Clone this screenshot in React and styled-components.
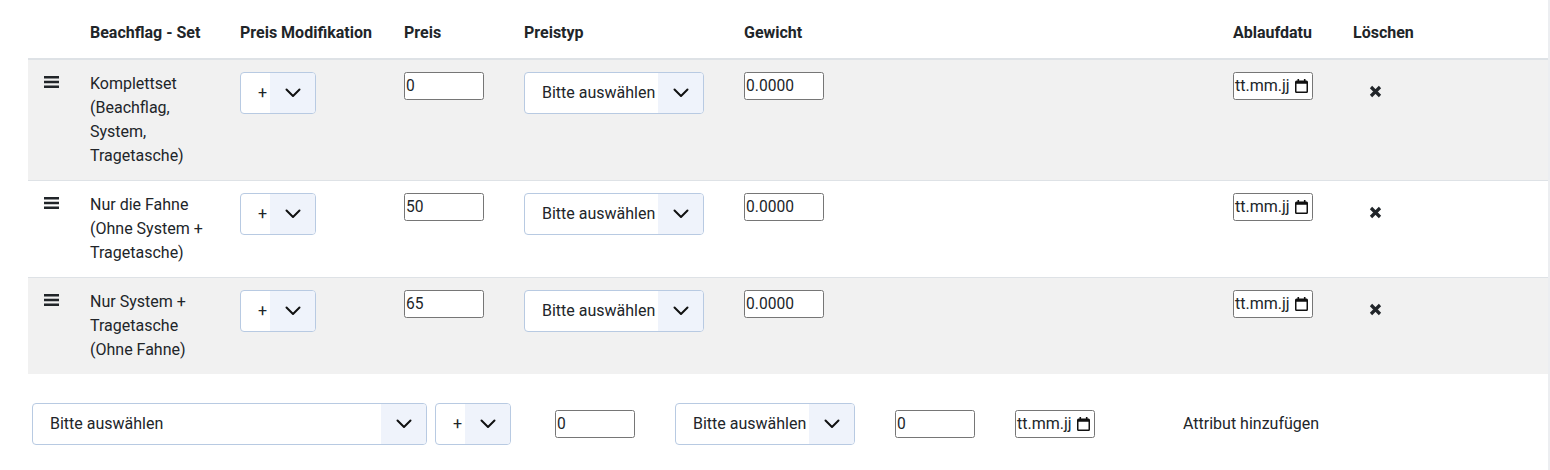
import React from "react"
import styled, { createGlobalStyle } from "styled-components";

const GlobalStyle = createGlobalStyle`
  html, body {
    margin: 0;
    padding: 0;
    background: #fff;
    overflow: hidden;
  }
  body {
    font-family: Roboto, "Liberation Sans", sans-serif;
    font-size: 16px;
    line-height: 24px;
    color: #212529;
  }
`;

const Page = styled.div`
  width: 1550px;
  height: 470px;
  box-sizing: border-box;
  border-right: 2px solid #eceef1;
  padding-left: 28px;
`;

const columns = "62px 150px 164px 120px 220px 489px 120px 1fr";

const HeadRow = styled.div`
  display: grid;
  grid-template-columns: ${columns};
  align-items: start;
  padding-top: 21px;
  box-sizing: border-box;
  border-bottom: 2px solid #dee2e6;
  height: 60px;
`;

const HeadCell = styled.div`
  font-weight: 700;
  white-space: nowrap;
`;

const Row = styled.div`
  display: grid;
  grid-template-columns: ${columns};
  box-sizing: border-box;
  height: ${props => props.$height}px;
  padding-top: 12px;
  align-items: start;
  background: ${props => props.$striped ? "#f1f1f1" : "#fff"};
  border-bottom: ${props => props.$last ? "none" : "1px solid #dee2e6"};
`;

const Handle = styled.div`
  padding-left: 16px;
  height: 20px;
  display: flex;
  align-items: center;
`;

const NameCell = styled.div`
  width: 120px;
`;

const SelectBox = styled.div`
  display: flex;
  box-sizing: border-box;
  width: ${props => props.$width}px;
  height: 42px;
  flex: none;
  background: #fff;
  border: 1px solid #b8cae2;
  border-radius: 4px;
  overflow: hidden;
`;

const SelectValue = styled.div`
  flex: 1;
  min-width: 0;
  padding-left: ${props => props.$pad}px;
  line-height: 39px;
  white-space: nowrap;
  overflow: hidden;
`;

const SelectArrow = styled.div`
  flex: none;
  width: 45px;
  display: flex;
  align-items: center;
  justify-content: center;
  background: #eff3fb;
  color: #111;
`;

const Field = styled.input`
  display: block;
  width: 80px;
  height: 28px;
  box-sizing: border-box;
  flex: none;
  padding: 0 1px;
  border: 1px solid #767676;
  border-radius: 2.5px;
  background: #fff;
  font-family: Roboto, sans-serif;
  font-size: 15.6px;
  color: #212529;
  outline: none;
`;

const DateField = styled.div`
  display: flex;
  align-items: center;
  justify-content: space-between;
  width: 80px;
  height: 28px;
  box-sizing: border-box;
  flex: none;
  padding: 0 4px 1px 1px;
  border: 1px solid #767676;
  border-radius: 2.5px;
  background: #fff;
  font-size: 16px;
  color: #212529;
  white-space: nowrap;
  overflow: hidden;
`;

const DeleteCell = styled.div`
  padding: 13px 0 0 16px;
  display: flex;
  color: #212529;
`;

const AddBar = styled.div`
  display: flex;
  align-items: center;
  margin-left: 4px;
  margin-top: 29px;
`;

const AddLabel = styled.div`
  margin-left: 88px;
  white-space: nowrap;
`;

const Spacer = styled.div`
  flex: none;
  width: ${props => props.$width}px;
`;

const Chevron = () => (
  <svg width="16" height="10" viewBox="0 0 16 10" fill="none">
    <path d="M1.5 1.5L8 8L14.5 1.5" stroke="currentColor" strokeWidth="2" strokeLinecap="round" strokeLinejoin="round" />
  </svg>
);

const BarsIcon = () => (
  <svg width="15" height="12" viewBox="0 0 15 12">
    <path d="M0 0h15v2.4H0zM0 4.8h15v2.4H0zM0 9.6h15v2.4H0z" fill="#212529" />
  </svg>
);

const CloseIcon = () => (
  <svg width="13" height="13" viewBox="0 0 13 13" fill="none">
    <path d="M2 2L11 11M11 2L2 11" stroke="#212529" strokeWidth="3.2" />
  </svg>
);

const CalendarIcon = () => (
  <svg width="13" height="14" viewBox="0 0 13 14" style={{ flex: "none" }}>
    <path d="M2.5 0h1.6v1.6h4.8V0h1.600v1.600h1A1.500 1.500 0 0 1 13 3.100v9.400a1.500 1.500 0 0 1-1.500 1.500h-10A1.500 1.500 0 0 1 0 12.500v-9.400A1.500 1.500 0 0 1 1.500 1.600h1zM1.500 4.800v7.700h10v-7.700z" fill="#111" />
  </svg>
);

const Select = ({ width, pad, value }) => (
  <SelectBox $width={width}>
    <SelectValue $pad={pad}>{value}</SelectValue>
    <SelectArrow><Chevron /></SelectArrow>
  </SelectBox>
);

const rows = [
  { name: "Komplettset (Beachflag, System, Tragetasche)", price: "0", height: 121, striped: true },
  { name: "Nur die Fahne (Ohne System + Tragetasche)", price: "50", height: 97 },
  { name: "Nur System + Tragetasche (Ohne Fahne)", price: "65", height: 96, striped: true, last: true },
];

const App = () => {
  return (
    <>
      <GlobalStyle />
      <Page>
        <HeadRow>
          <div />
          <HeadCell>Beachflag - Set</HeadCell>
          <HeadCell>Preis Modifikation</HeadCell>
          <HeadCell>Preis</HeadCell>
          <HeadCell>Preistyp</HeadCell>
          <HeadCell>Gewicht</HeadCell>
          <HeadCell>Ablaufdatu</HeadCell>
          <HeadCell>Löschen</HeadCell>
        </HeadRow>
        {rows.map(row => (
          <Row key={row.name} $height={row.height} $striped={row.striped} $last={row.last}>
            <Handle><BarsIcon /></Handle>
            <NameCell>{row.name}</NameCell>
            <Select width={76} pad={17} value="+" />
            <Field defaultValue={row.price} />
            <Select width={180} pad={17} value="Bitte auswählen" />
            <Field defaultValue="0.0000" />
            <DateField>tt.mm.jj<CalendarIcon /></DateField>
            <DeleteCell><CloseIcon /></DeleteCell>
          </Row>
        ))}
        <AddBar>
          <Select width={395} pad={17} value="Bitte auswählen" />
          <Spacer $width={8} />
          <Select width={76} pad={17} value="+" />
          <Spacer $width={44} />
          <Field defaultValue="0" />
          <Spacer $width={40} />
          <Select width={180} pad={17} value="Bitte auswählen" />
          <Spacer $width={40} />
          <Field defaultValue="0" />
          <Spacer $width={40} />
          <DateField>tt.mm.jj<CalendarIcon /></DateField>
          <AddLabel>Attribut hinzufügen</AddLabel>
        </AddBar>
      </Page>
    </>
  )
}

export default App;
